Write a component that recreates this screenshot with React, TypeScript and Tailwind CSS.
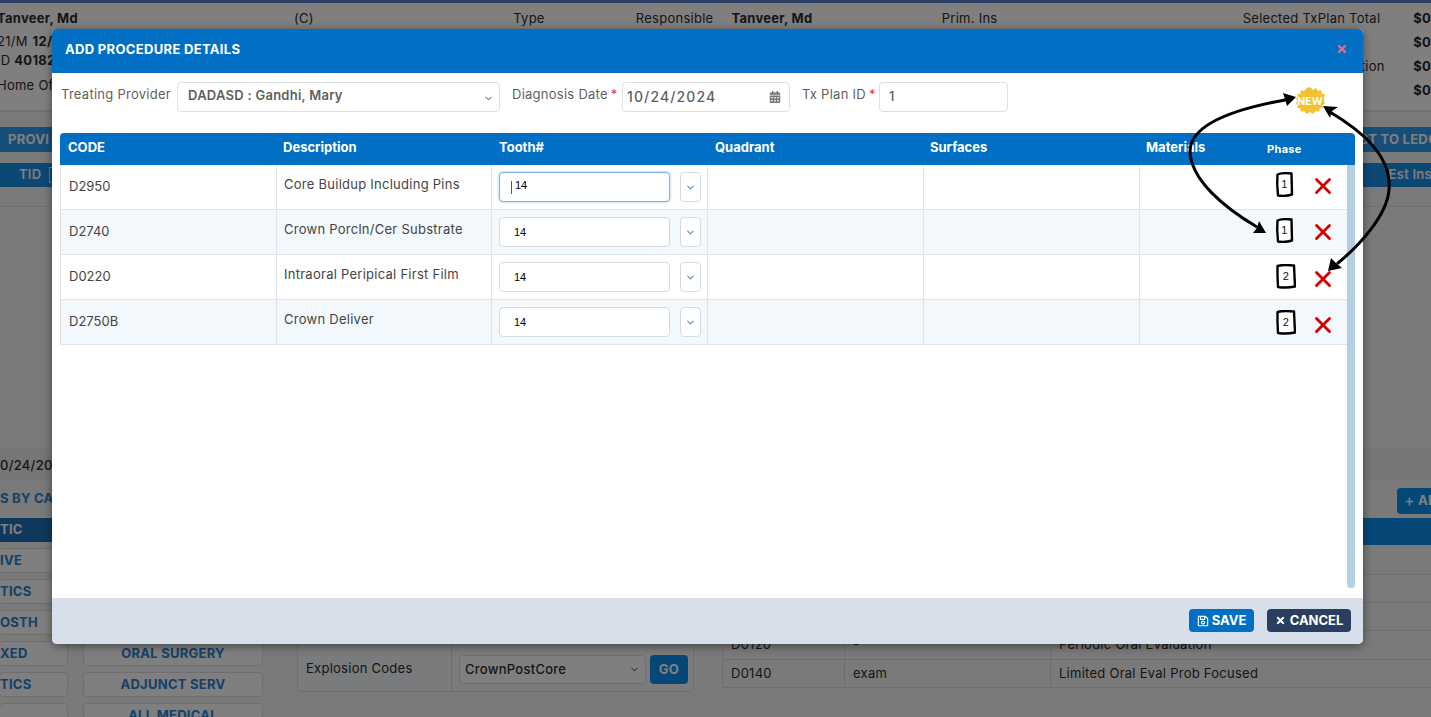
import React from 'react';
import { ChevronDown, X } from 'lucide-react';
import { FaCalendarAlt, FaRegSave, FaTimes, FaPlus } from 'react-icons/fa';

const font = "font-['Inter','Open_Sans',sans-serif]";

const rows = [
  { code: 'D2950', desc: 'Core Buildup Including Pins', phase: 1, focus: true, box: 'mb-[5px]', del: 'mb-[3px]' },
  { code: 'D2740', desc: 'Crown Porcln/Cer Substrate', phase: 1, box: 'mb-[3px]', del: 'mb-[1px]' },
  { code: 'D0220', desc: 'Intraoral Peripical First Film', phase: 2, box: 'mb-[2px]', del: 'mt-[3px]' },
  { code: 'D2750B', desc: 'Crown Deliver', phase: 2, box: 'mb-0', del: 'mt-[5px]' },
];

const leftButtons = ['IVE', 'TICS', 'OSTH', 'XED', 'TICS', ''];

// hand drawn page icon with the phase number in it
const PhaseBox = ({ n, className }: { n: number; className: string }) => (
  <svg width="20" height="25" viewBox="0 0 20 25" className={`shrink-0 ${className}`}>
    <path
      d={n === 1 ? 'M1.5 2.5 C5 1 11 1 15.5 1.5 L16 22.5 C11 24 5.5 24 2 23.5 L1.2 12 Z' : 'M1.5 2 C6 0.8 13 1 18 1.5 L19 22.5 C13 23.8 7 23.8 2 23 L1.5 12 Z'}
      fill="#fff"
      stroke="#000"
      strokeWidth="2.4"
      strokeLinejoin="round"
    />
    <text x={n === 1 ? 8.5 : 10} y="15.5" textAnchor="middle" fontSize="11" fontFamily="Liberation Sans, sans-serif" fill="#111">{n}</text>
  </svg>
);

const Background = () => (
  <div className={`h-[717px] w-[1431px] overflow-hidden bg-[#f5f5f5] text-[13px] tracking-[0.02em] text-[#2b2b2b] ${font}`}>
    <div className="h-[3px] bg-[#5a7fc4]" />
    <div className="flex h-[109px] border-b-2 border-[#e4e4e4] bg-white pt-[7px]">
      <div className="-ml-[3px] w-[298px]">
        <div className="font-bold leading-4">Tanveer, Md</div>
        <div className="mt-[7px] leading-4">21/M <b className="ml-[1px]">12/1</b></div>
        <div className="mt-[3px] leading-4">ID <b>40182</b></div>
        <div className="mt-[9px] leading-4">Home Of</div>
      </div>
      <div className="w-[220px] leading-4">(C)</div>
      <div className="w-[123px] leading-4">Type</div>
      <div className="w-[96px] leading-4">Responsible</div>
      <div className="w-[211px] font-bold leading-4">Tanveer, Md</div>
      <div className="w-[302px] leading-4">Prim. Ins</div>
      <div className="w-[171px] leading-4">
        Selected TxPlan Total
        <div className="mt-[32px] pl-[118px]">tion</div>
      </div>
      <div className="font-bold leading-4">
        $0
        <div className="mt-[8px]">$0</div>
        <div className="mt-[8px]">$0</div>
        <div className="mt-[8px]">$0</div>
      </div>
    </div>
    <div className="mt-[15px] flex h-[25px] items-center justify-between bg-[#2a9cf0] pl-2 font-bold text-white">
      <span>PROVI</span>
      <span className="-mr-[7px]">ST TO LEDG</span>
    </div>
    <div className="mt-[11px] flex h-[24px] items-center justify-between bg-[#1a90e8] pl-[19px] font-semibold text-white">
      <span className="flex items-center gap-2">TID <span className="h-4 w-4 border border-white" /></span>
      <span className="-mr-[1px]">Est Ins</span>
    </div>
    <div className="h-[20px] border-b border-[#e0e0e0]" />

    <div className="mt-[241px] flex h-[32px] items-center bg-[#ececec] pt-[3px] font-medium">0/24/202</div>

    <div className="flex">
      <div className="w-[263px] shrink-0">
        <div className="h-[38px] pt-[9px] font-bold text-[#2a80d0]">S BY CAT</div>
        <div className="flex h-[24px] items-center bg-[#1c70b8] font-bold text-white">TIC</div>
        <div className="flex gap-[15px]">
          <div className="-ml-[1px] w-[69px] shrink-0 pt-[6px]">
            {leftButtons.map((b, i) => (
              <div key={i} className="mb-[6px] flex h-[25px] items-center rounded border border-[#dcdcdc] bg-white font-bold text-[#2a80d0]">{b}</div>
            ))}
          </div>
          <div className="w-[180px] pt-[99px]">
            {['ORAL SURGERY', 'ADJUNCT SERV', 'ALL MEDICAL'].map((b) => (
              <div key={b} className="mb-[6px] flex h-[25px] items-center justify-center rounded border border-[#dcdcdc] bg-white font-bold text-[#2a80d0]">{b}</div>
            ))}
          </div>
        </div>
      </div>

      <div className="ml-[34px] mt-[160px] flex h-[52px] w-[397px] items-end rounded border border-[#dcdcdc] bg-[#f3f7fb]">
        <div className="flex h-[45px] w-[153px] items-center pl-2">Explosion Codes</div>
        <div className="flex h-full items-end gap-[4px] border-l border-[#dcdcdc] pb-[7px] pl-[7px]">
          <div className="flex h-[29px] w-[187px] items-center justify-between rounded border border-[#dcdcdc] bg-white px-[5px] font-medium">
            CrownPostCore
            <ChevronDown size={11} />
          </div>
          <div className="flex h-[29px] w-[38px] items-center justify-center rounded bg-[#0a90f0] font-bold text-white">GO</div>
        </div>
      </div>

      <div className="ml-[28px] flex-1">
        <div className="flex h-[38px] items-start justify-end pt-[8px]">
          <div className="-mr-[10px] flex h-[26px] w-[44px] items-center gap-1 rounded bg-[#0a90f0] pl-2 font-bold text-white"><FaPlus size={9} />AD</div>
        </div>
        <div className="h-[27px] bg-[#0a90f0]" />
        <div className="h-[30px] border-b border-[#dcdcdc]" />
        <div className="h-[28px] border-b border-[#dcdcdc]" />
        <div className="h-[28px] border-b border-[#dcdcdc]" />
        <div className="flex h-[29px] items-center border-b border-[#dcdcdc]">
          <span className="flex h-full w-[122px] items-center border-l border-[#dcdcdc] pl-2">D0120</span>
          <span className="flex h-full w-[206px] items-center border-l border-[#dcdcdc] pl-2">-</span>
          <span className="flex h-full items-center border-l border-[#dcdcdc] pl-2">Periodic Oral Evaluation</span>
        </div>
        <div className="flex h-[28px] items-center border-b border-[#dcdcdc]">
          <span className="flex h-full w-[122px] items-center border-l border-[#dcdcdc] pl-2">D0140</span>
          <span className="flex h-full w-[206px] items-center border-l border-[#dcdcdc] pl-2">exam</span>
          <span className="flex h-full items-center border-l border-[#dcdcdc] pl-2">Limited Oral Eval Prob Focused</span>
        </div>
      </div>
    </div>
  </div>
);

const Modal = () => (
  <div className={`absolute left-[52px] top-[29px] z-20 flex h-[615px] w-[1311px] flex-col overflow-hidden rounded-[5px] bg-white shadow-[0_2px_10px_rgba(0,0,0,0.45)] ${font}`}>
    <div className="flex h-[44px] shrink-0 items-center justify-between bg-[#0170c4] pb-[2px] pl-[13px] pr-[15px]">
      <span className="text-[13px] font-bold tracking-[0.025em] text-white">ADD PROCEDURE DETAILS</span>
      <FaTimes size={12} className="mb-[3px] text-[#ee6a88]" />
    </div>

    <div className="flex h-[60px] shrink-0 items-start pl-[9px] pt-[9px] text-[13px] tracking-[0.02em] text-[#5f5f5f]">
      <label className="mt-[3px] w-[116px]">Treating Provider</label>
      <div className="flex h-[30px] w-[323px] items-center justify-between rounded border border-[#dcdfe4] pb-[3px] pl-[10px] pr-[5px] font-semibold">
        DADASD : Gandhi, Mary
        <ChevronDown size={11} className="mt-[5px] text-[#333]" />
      </div>
      <label className="ml-[12px] mt-[3px] w-[110px]">Diagnosis Date<span className="ml-[3px] text-[#e53935]">*</span></label>
      <div className="flex h-[30px] w-[168px] items-center justify-between rounded border border-[#dcdfe4] pb-[1px] pl-[4px] pr-[8px] text-[14px] font-medium tracking-[0.08em]">
        10/24/2024
        <FaCalendarAlt size={12} className="text-[#777]" />
      </div>
      <label className="ml-[12px] mt-[3px] w-[77px]">Tx Plan ID<span className="ml-[3px] text-[#e53935]">*</span></label>
      <div className="flex h-[30px] w-[129px] items-center rounded border border-[#dcdfe4] pl-[9px] font-medium">1</div>
    </div>

    <div className="relative mx-[8px] flex-1">
      <div className="grid h-[32px] grid-cols-[216px_215px_216px_216px_216px_128px_1fr] items-center rounded-t-[4px] bg-[#0170c4] pb-[3px] text-[13px] font-bold text-white">
        <span className="pl-[8px]">CODE</span>
        <span className="pl-[7px]">Description</span>
        <span className="pl-[8px]">Tooth#</span>
        <span className="pl-[8px]">Quadrant</span>
        <span className="pl-[7px]">Surfaces</span>
        <span className="pl-[7px]">Materials</span>
        <span className="mt-[3px] text-[11px] tracking-[0.03em]">Phase</span>
      </div>
      {rows.map((r, i) => (
        <div
          key={r.code}
          className={`grid h-[45px] grid-cols-[216px_215px_216px_216px_216px_1fr] border-b border-[#dfe4ea] text-[13px] tracking-[0.02em] text-[#444] ${i % 2 ? 'bg-[#f3f8fc]' : 'bg-white'}`}
        >
          <div className="flex items-center border-l border-[#dfe4ea] pl-[8px] tracking-normal">{r.code}</div>
          <div className="border-l border-[#dfe4ea] pl-[7px] pt-[10px]">{r.desc}</div>
          <div className="flex items-center gap-[10px] border-l border-[#dfe4ea] pl-[7px]">
            <div className={`flex h-[30px] w-[171px] items-center rounded border bg-white pl-[14px] font-['Liberation_Sans',sans-serif] text-[11px] tracking-normal text-black ${r.focus ? 'border-[#7fb2de] pb-[3px] shadow-[0_0_3px_rgba(1,112,196,0.4)]' : 'border-[#d6dbe2]'}`}>
              {r.focus && <span className="-ml-[3px] mr-[3px] mt-[3px] h-[13px] w-px bg-[#555]" />}14
            </div>
            <div className="flex h-[30px] w-[21px] items-center justify-center rounded border border-[#d6dbe2] bg-white">
              <ChevronDown size={11} strokeWidth={2.5} className="text-[#5b8fc0]" />
            </div>
          </div>
          <div className="border-l border-[#dfe4ea]" />
          <div className="border-l border-[#dfe4ea]" />
          <div className="flex items-center border-l border-[#dfe4ea] pl-[136px]">
            <PhaseBox n={r.phase} className={r.box} />
            <X size={26} strokeWidth={2.6} className={`ml-[14px] shrink-0 text-[#d40000] ${r.del}`} />
          </div>
        </div>
      ))}
      <div className="absolute right-0 top-[32px] h-[423px] w-[8px] rounded-b bg-[#b5cfe2]" />
    </div>

    <div className="flex h-[46px] shrink-0 items-center justify-end gap-[13px] bg-[#d7e0ea] pb-[1px] pr-[12px] text-[13px] font-bold text-white">
      <div className="flex h-[23px] w-[65px] items-center justify-center gap-[3px] rounded bg-[#0170c4]">
        <FaRegSave size={12} />SAVE
      </div>
      <div className="flex h-[23px] w-[84px] items-center justify-center gap-[4px] rounded bg-[#2a3f5f]">
        <FaTimes size={11} />CANCEL
      </div>
    </div>
  </div>
);

// the NEW badge and the arrows are annotations laid over the screenshot
const Annotations = () => (
  <svg className="pointer-events-none absolute left-0 top-0 z-30" width="1431" height="717" viewBox="0 0 1431 717">
    <polygon
      fill="#f2c230"
      points="1310,87 1313,90 1316,88 1318,91 1321,90 1322,94 1325,94 1324,97 1324,98 1324,101 1325,104 1322,105 1323,108 1320,108 1319,112 1316,111 1313,114 1310,112 1307,114 1304,111 1301,112 1300,108 1297,108 1298,105 1296,104 1297,101 1296,98 1298,97 1297,94 1300,94 1301,90 1304,91 1307,88"
    />
    <text x="1310" y="105" textAnchor="middle" fontSize="10.5" fontWeight="700" fontFamily="Inter, sans-serif" fill="#fff">NEW</text>
    <g fill="none" stroke="#000" strokeWidth="3" strokeLinecap="round">
      <path d="M1285 100 C1240 108 1192 122 1190 150 C1190 180 1225 208 1257 227" />
      <path d="M1330 112 C1360 130 1392 155 1389 190 C1387 215 1360 245 1338 263" />
    </g>
    <g fill="#000">
      <polygon points="1296,97 1283,93 1285,99 1287,106" />
      <polygon points="1323,106 1338,107 1332,111 1330,118" />
      <polygon points="1266,233 1253,233 1257,228 1259,221" />
      <polygon points="1328,271 1331,258 1336,263 1342,268" />
    </g>
  </svg>
);

export default function App() {
  return (
    <div className="relative h-[717px] w-[1431px] overflow-hidden">
      <Background />
      <div className="absolute inset-0 z-10 bg-black/50" />
      <Modal />
      <Annotations />
    </div>
  );
}
